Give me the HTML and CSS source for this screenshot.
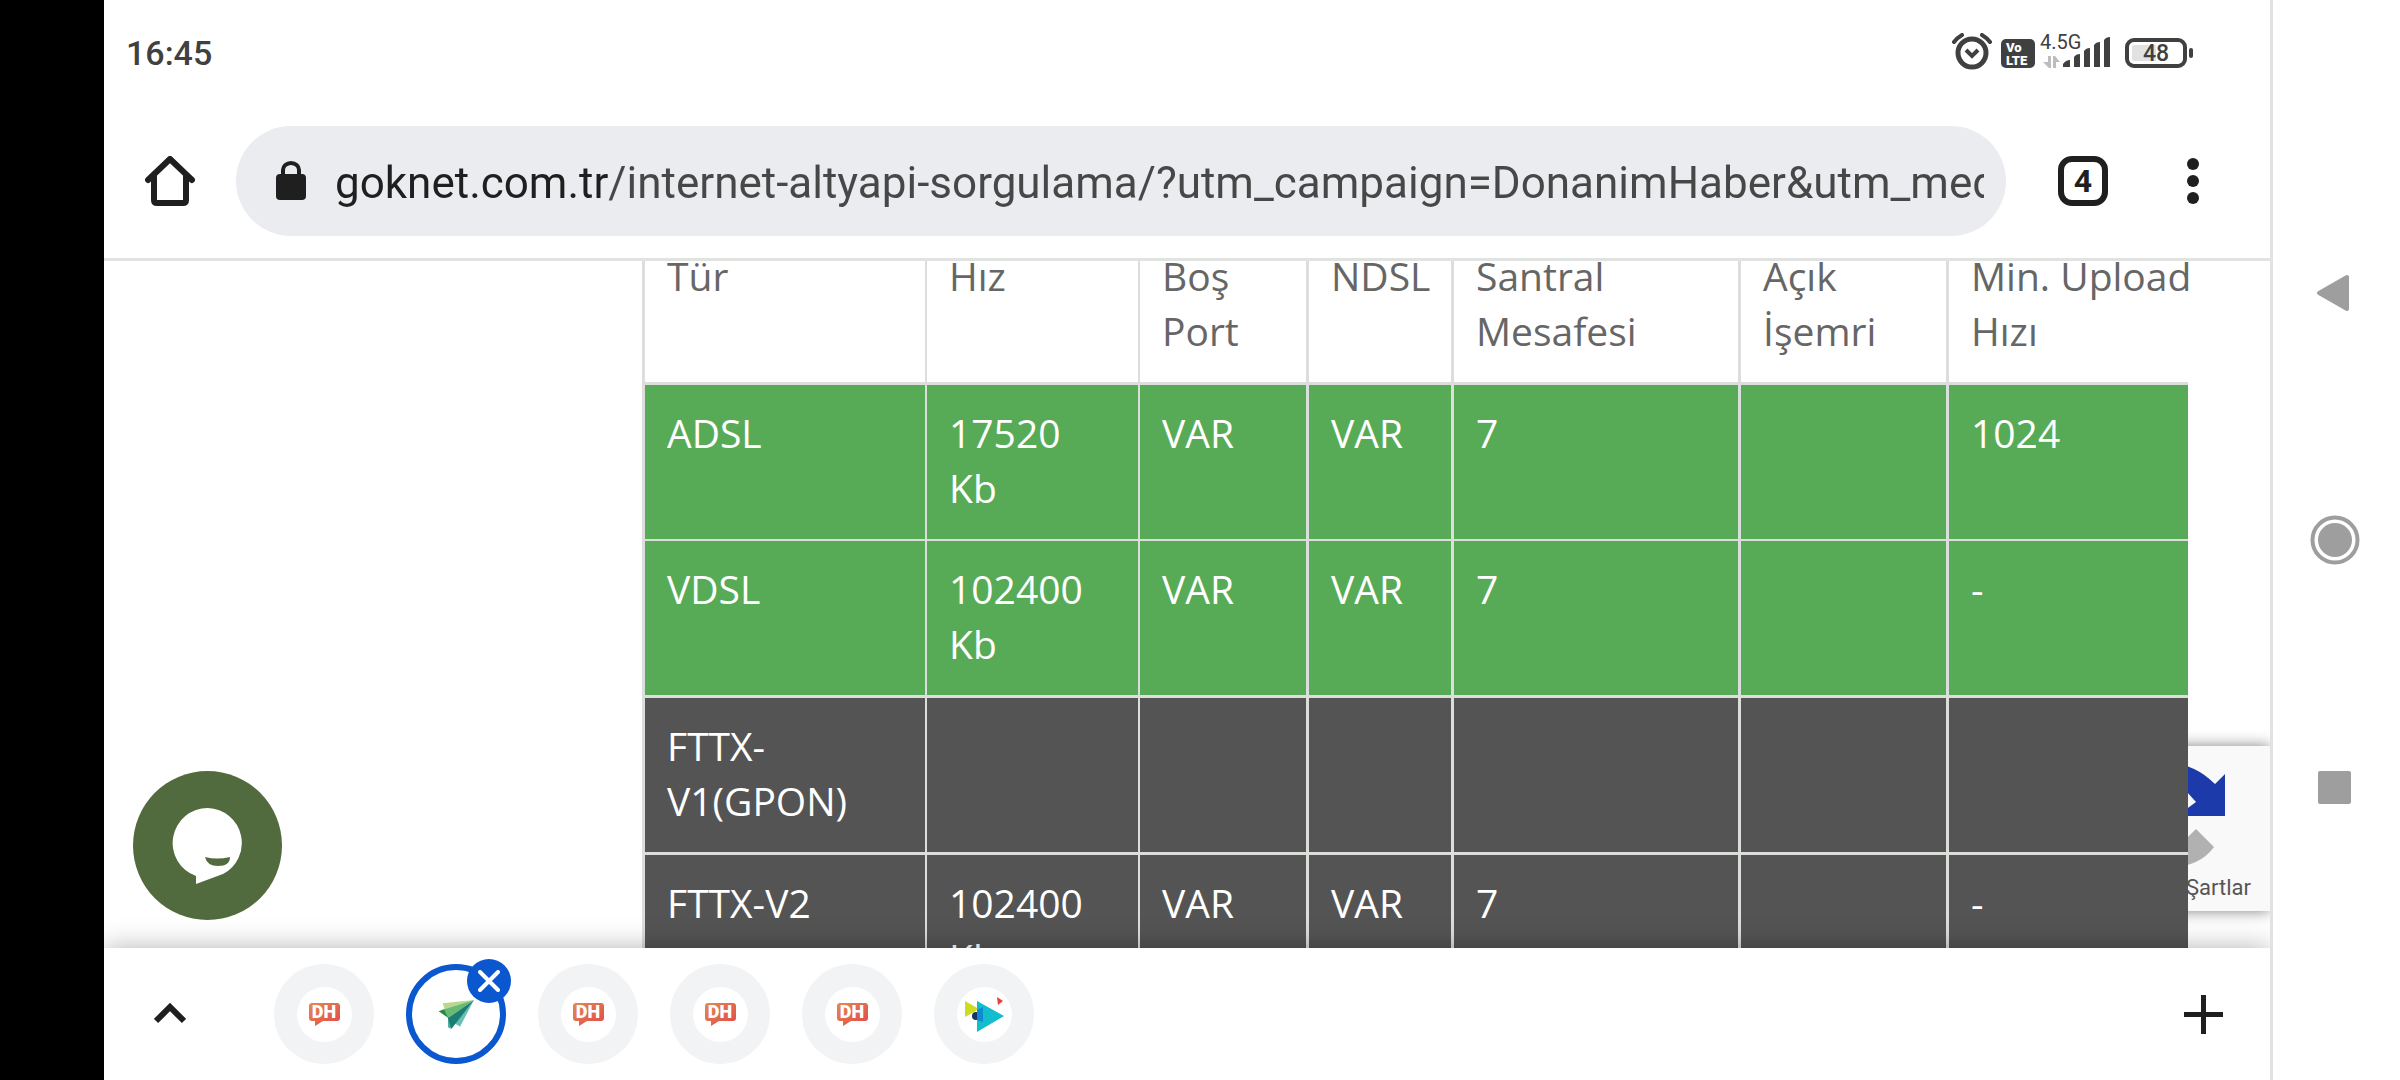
FILE: index.html
```html
<!DOCTYPE html>
<html lang="tr">
<head>
<meta charset="utf-8">
<meta name="viewport" content="width=device-width, initial-scale=1">
<title>İnternet Altyapı Sorgulama</title>
<link rel="stylesheet" href="styles.css">
</head>
<body>
<svg class="defs" aria-hidden="true">
  <defs>
    <linearGradient id="dh-fill" x1="0" y1="0" x2="1" y2="1">
      <stop offset="0" stop-color="#e48a4e"/>
      <stop offset="1" stop-color="#e0494c"/>
    </linearGradient>
    <symbol id="dh" viewBox="0 0 31 23">
      <path d="M3 0h25a3 3 0 0 1 3 3v12a3 3 0 0 1-3 3H14l-8 5V18H3a3 3 0 0 1-3-3V3a3 3 0 0 1 3-3z" fill="url(#dh-fill)"/>
      <text x="15" y="15" text-anchor="middle" class="dh-text">DH</text>
    </symbol>
  </defs>
</svg>

<div class="cutout"></div>

<div class="screen">
  <header class="status">
    <time class="clock">16:45</time>
    <div class="status-icons">
      <svg class="alarm" width="40" height="40" viewBox="0 0 40 40" fill="none" stroke="#404040">
        <circle cx="20" cy="20" r="14" stroke-width="5"/>
        <path d="M2 9Q5 5 10 2M38 9Q35 5 30 2" stroke-width="4" stroke-linecap="round"/>
        <path d="M14 17l6 6 6-6" stroke-width="4"/>
      </svg>
      <div class="volte"><span>Vo</span><span>LTE</span></div>
      <svg class="signal" width="72" height="40" viewBox="0 0 72 40">
        <text x="0" y="16" class="network">4.5G</text>
        <path d="M8 23h3v12H9l-6-6h5zM13 35V23h2l5 6h-4v6z" fill="#bdbdbd"/>
        <path d="M23 34v-3q3-4 7-4v7zM34 34V24q2-3 6-3v13zM44 34V18q2-3 6-3v19zM54 34V12q2-3 6-3v25zM64 34V7q2-3 6-3v30z" fill="#404040"/>
      </svg>
      <div class="battery"><span class="battery-body">48</span><span class="battery-tip"></span></div>
    </div>
  </header>

  <div class="toolbar">
    <button class="icon-button home" aria-label="Ana sayfa">
      <svg width="50" height="50" viewBox="0 0 50 50" fill="none" stroke="#1f1f1f" stroke-width="6" stroke-linejoin="round" stroke-linecap="round">
        <path d="M3 24L25 3l22 21"/>
        <path d="M9 21v23q0 3 3 3h26q3 0 3-3V21" />
      </svg>
    </button>
    <div class="omnibox">
      <svg width="30" height="40" viewBox="0 0 30 40">
        <rect x="0" y="13" width="30" height="26" rx="4" fill="#1f1f1f"/>
        <path d="M7 14V9a8 7 0 0 1 16 0v5" fill="none" stroke="#1f1f1f" stroke-width="4"/>
      </svg>
      <input class="url" type="text" aria-label="Adres" value="goknet.com.tr/internet-altyapi-sorgulama/?utm_campaign=DonanimHaber&amp;utm_medium">
    </div>
    <button class="tab-count" aria-label="Sekmeler">4</button>
    <button class="icon-button" aria-label="Menü">
      <svg width="12" height="46" viewBox="0 0 12 46" fill="#1f1f1f">
        <circle cx="6" cy="6" r="6"/><circle cx="6" cy="23" r="6"/><circle cx="6" cy="40" r="6"/>
      </svg>
    </button>
  </div>

  <main class="page">
    <table class="results">
      <colgroup>
        <col class="c-type"><col class="c-speed"><col class="c-port"><col class="c-ndsl"><col class="c-distance"><col class="c-order"><col>
      </colgroup>
      <thead>
        <tr><th>Tür</th><th>Hız</th><th>Boş Port</th><th>NDSL</th><th>Santral Mesafesi</th><th>Açık İşemri</th><th class="upload">Min. Upload<br>Hızı</th></tr>
      </thead>
      <tbody>
        <tr class="available first"><td>ADSL</td><td>17520 Kb</td><td>VAR</td><td>VAR</td><td>7</td><td></td><td>1024</td></tr>
        <tr class="available"><td>VDSL</td><td>102400 Kb</td><td>VAR</td><td>VAR</td><td>7</td><td></td><td>-</td></tr>
        <tr class="other"><td>FTTX-V1(GPON)</td><td></td><td></td><td></td><td></td><td></td><td></td></tr>
        <tr class="other"><td>FTTX-V2</td><td>102400 Kb</td><td>VAR</td><td>VAR</td><td>7</td><td></td><td>-</td></tr>
      </tbody>
    </table>

    <aside class="captcha">
      <svg width="120" height="106" viewBox="0 0 120 106">
        <path d="M32 1Q60-2 83 21L93 11V53H45l19-14-9-10Q47 20 32 20z" fill="#1c3aa9"/>
        <path d="M32 85V104Q66 106 82 84L64 66Q50 82 32 85z" fill="#b1b1b1"/>
      </svg>
      <a class="terms" href="#">Şartlar</a>
    </aside>

    <button class="chat" aria-label="Sohbet">
      <svg width="76" height="80" viewBox="0 0 76 80">
        <path d="M38 2a35 35 0 0 1 15 66L26 78V70A35 35 0 0 1 38 2z" fill="#fff"/>
        <path d="M35 51q12 3 25 0 0 9-12 9-11 0-13-9z" fill="#526b3e"/>
      </svg>
    </button>
  </main>

  <nav class="tabs" aria-label="Sekme grubu">
    <button class="icon-button" aria-label="Genişlet">
      <svg width="32" height="22" viewBox="0 0 32 22" fill="none" stroke="#1f1f1f" stroke-width="6"><path d="M2 18L16 4l14 14"/></svg>
    </button>
    <div class="tab-list">
      <button class="tab" aria-label="DonanımHaber"><span class="favicon"><svg width="31" height="23"><use href="#dh"/></svg></span></button>
      <button class="tab selected" aria-label="Göknet, kapat">
        <svg width="40" height="40" viewBox="0 0 120 120">
          <path d="M20 28L114 18 26 46z" fill="#b9d78f"/>
          <path d="M8 52L28 44 40 74z" fill="#258a3c"/>
          <path d="M24 46L114 18 36 72z" fill="#69bb73"/>
          <path d="M114 18L72 98 56 88z" fill="#66c0b4"/>
          <path d="M36 68L50 74 44 104 36 100z" fill="#4fae9f"/>
          <path d="M36 72L114 18 46 105z" fill="#1c7d73"/>
        </svg>
        <span class="close"><svg width="22" height="22" viewBox="0 0 22 22" fill="none" stroke="#fff" stroke-width="4" stroke-linecap="round"><path d="M2 2l18 18M20 2L2 20"/></svg></span>
      </button>
      <button class="tab" aria-label="DonanımHaber"><span class="favicon"><svg width="31" height="23"><use href="#dh"/></svg></span></button>
      <button class="tab" aria-label="DonanımHaber"><span class="favicon"><svg width="31" height="23"><use href="#dh"/></svg></span></button>
      <button class="tab" aria-label="DonanımHaber"><span class="favicon"><svg width="31" height="23"><use href="#dh"/></svg></span></button>
      <button class="tab" aria-label="Video"><span class="favicon">
        <svg width="44" height="44" viewBox="0 0 44 44">
          <path d="M3 9l14 8L3 25z" fill="#cddc1e"/>
          <path d="M15 9l27 15-27 16z" fill="#12bdcd"/>
          <circle cx="14" cy="24" r="4" fill="#17365f"/>
          <path d="M15 18l6-3v15l-6-2z" fill="#1188d2"/>
          <path d="M35 5l6 4-5 4z" fill="#e5403c"/>
        </svg></span></button>
    </div>
    <button class="icon-button" aria-label="Yeni sekme">
      <svg width="39" height="39" viewBox="0 0 39 39" stroke="#1f1f1f" stroke-width="5"><path d="M0 19.500h39M19.500 0v39"/></svg>
    </button>
  </nav>
</div>

<nav class="system-nav" aria-label="Sistem">
  <button aria-label="Geri"><svg width="38" height="38" viewBox="0 0 38 38"><path d="M3 19L31 3v32z" fill="#9e9e9e" stroke="#9e9e9e" stroke-width="4" stroke-linejoin="round"/></svg></button>
  <button aria-label="Ana ekran"><svg width="50" height="50" viewBox="0 0 50 50"><circle cx="25" cy="25" r="22.500" fill="none" stroke="#9e9e9e" stroke-width="4"/><circle cx="25" cy="25" r="17" fill="#9e9e9e"/></svg></button>
  <button aria-label="Son uygulamalar"><svg width="33" height="33" viewBox="0 0 33 33"><rect width="33" height="33" rx="2" fill="#9e9e9e"/></svg></button>
</nav>
</body>
</html>
```
FILE: styles.css
```css
* { box-sizing: border-box; }

body {
  margin: 0;
  display: flex;
  height: 100vh;
  overflow: hidden;
  background: #fff;
  font-family: Roboto, "Liberation Sans", sans-serif;
}

svg { display: block; flex: none; }
.defs { position: absolute; width: 0; height: 0; }
button { margin: 0; padding: 0; border: 0; background: none; font: inherit; color: inherit; }

.cutout { flex: none; width: 104px; background: #000; }
.screen { flex: 1; min-width: 0; display: flex; flex-direction: column; }

/* Status bar */
.status {
  flex: none;
  height: 106px;
  padding: 0 77px 0 22px;
  display: flex;
  align-items: center;
  justify-content: space-between;
  color: #404040;
}
.clock { font-size: 34px; font-weight: 500; }
.status-icons { display: flex; align-items: center; }
.volte {
  display: flex;
  flex-direction: column;
  width: 34px;
  height: 29px;
  margin: 0 5px 0 9px;
  padding: 2px 5px;
  border-radius: 5px;
  background: #404040;
  color: #fff;
  font-size: 13px;
  font-weight: 900;
  line-height: 13px;
}
.network { font-size: 20px; fill: #404040; }
.battery { display: flex; align-items: center; margin-left: 13px; gap: 2px; }
.battery-body {
  width: 62px;
  height: 30px;
  border: 4px solid #404040;
  border-radius: 9px;
  background: linear-gradient(90deg, #e2e2e2 50%, #fff 50%) content-box;
  padding: 3px;
  font-size: 23px;
  font-weight: 500;
  line-height: 18px;
  text-align: center;
}
.battery-tip { width: 4px; height: 10px; border-radius: 2px; background: #404040; }

/* Browser toolbar */
.toolbar {
  flex: none;
  display: flex;
  align-items: center;
  padding: 20px 71px 22px 41px;
  border-bottom: 3px solid #e1e3e1;
}
.home { margin-right: 41px; }
.omnibox {
  flex: 1;
  min-width: 0;
  display: flex;
  align-items: center;
  gap: 29px;
  height: 110px;
  padding: 0 22px 0 40px;
  border-radius: 55px;
  background: #ebecf0;
}
.url {
  flex: 1;
  min-width: 0;
  height: 64px;
  padding: 4px 0 0;
  border: 0;
  outline: 0;
  font: 44px/60px Roboto, "Liberation Sans", sans-serif;
  color: #474747;
  background: linear-gradient(90deg, #1f1f1f 273px, #474747 273px);
  -webkit-background-clip: text;
  background-clip: text;
  -webkit-text-fill-color: transparent;
}
.tab-count {
  width: 50px;
  height: 50px;
  margin: 0 79px 0 52px;
  border: 6px solid #1f1f1f;
  border-radius: 14px;
  font-size: 32px;
  font-weight: 700;
  line-height: 38px;
  color: #1f1f1f;
}

/* Page */
.page {
  position: relative;
  flex: 1;
  min-height: 0;
  overflow: hidden;
  padding: 0 82px 0 538px;
}
.results {
  position: relative;
  z-index: 1;
  width: 100%;
  margin-top: -33px;
  border-spacing: 0;
  table-layout: fixed;
  font: 39px/55px "Open Sans", "Noto Sans", sans-serif;
  color: #666;
}
.c-type { width: 283px; }
.c-speed { width: 213px; }
.c-port { width: 168px; }
.c-ndsl { width: 145px; }
.c-distance { width: 287px; }
.c-order { width: 208px; }
th, td {
  height: 157px;
  padding: 20px 22px 24px;
  border: solid #dbdedb;
  border-width: 0 0 3px 3px;
  font-weight: 400;
  text-align: left;
  vertical-align: top;
}
th:nth-child(2), td:nth-child(2), th:nth-child(3), td:nth-child(3) { border-left-width: 2px; }
.upload { padding-right: 0; white-space: nowrap; }
.available { background: #58ab56; color: #fff; }
.first td { height: 156px; border-bottom-width: 2px; }
.other { background: #545454; color: #fff; }

.captcha {
  position: absolute;
  right: 0;
  bottom: 37px;
  width: 140px;
  height: 165px;
  padding: 17px 19px 0 0;
  background: #f9f9f9;
  box-shadow: 0 0 14px #808080;
}
.captcha svg { margin-left: 2px; }
.terms {
  display: block;
  margin-top: 6px;
  font-size: 22px;
  line-height: 26px;
  text-align: right;
  text-decoration: none;
  color: #555;
}
.chat {
  position: absolute;
  left: 29px;
  bottom: 28px;
  width: 149px;
  height: 149px;
  border-radius: 50%;
  background: #526b3e;
  display: grid;
  place-items: center;
}

/* Tab group strip */
.tabs {
  position: relative;
  z-index: 2;
  flex: none;
  display: flex;
  align-items: center;
  height: 132px;
  padding: 0 47px 0 50px;
  background: #fff;
  box-shadow: 0 0 26px rgba(0, 0, 0, 0.3);
  clip-path: inset(-30px 0 0 0);
}
.tab-list { flex: 1; display: flex; gap: 32px; margin-left: 88px; }
.tab {
  position: relative;
  width: 100px;
  height: 100px;
  border-radius: 50%;
  background: #f2f3f5;
  display: grid;
  place-items: center;
}
.selected { border: 6px solid #0b57d0; background: #fff; }
.favicon {
  width: 55px;
  height: 55px;
  border-radius: 50%;
  background: #fff;
  display: grid;
  place-items: center;
}
.dh-text { font: 900 18px Roboto, sans-serif; fill: #fff; }
.close {
  position: absolute;
  top: -11px;
  right: -11px;
  width: 44px;
  height: 44px;
  border-radius: 50%;
  background: #0b57d0;
  display: grid;
  place-items: center;
}

/* System navigation */
.system-nav {
  flex: none;
  width: 130px;
  padding-right: 4px;
  border-left: 3px solid #e0e3e0;
  display: flex;
  flex-direction: column;
  justify-content: center;
}
.system-nav button { height: 247px; display: grid; place-items: center; }
```
